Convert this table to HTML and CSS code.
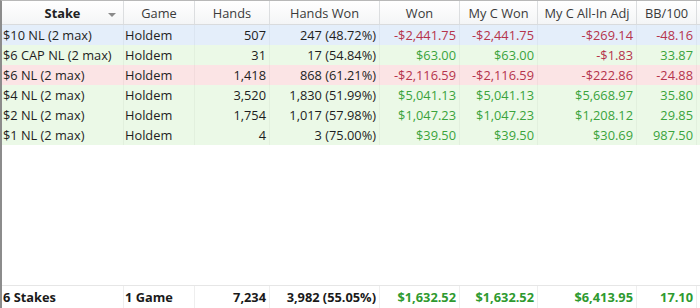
FILE: index.html
```html
<!DOCTYPE html>
<html>
<head>
<meta charset="utf-8">
<link rel="stylesheet" href="styles.css">
</head>
<body>
<div class="grid">
  <div class="row head">
    <div class="cell c-stake"><span class="bold">Stake</span><span class="sort"></span></div>
    <div class="cell">Game</div>
    <div class="cell">Hands</div>
    <div class="cell">Hands Won</div>
    <div class="cell">Won</div>
    <div class="cell">My C Won</div>
    <div class="cell">My C All-In Adj</div>
    <div class="cell">BB/100</div>
    <div class="cell last"></div>
  </div>
  <div class="row blue">
    <div class="cell l">$10 NL (2 max)</div><div class="cell l">Holdem</div><div class="cell r">507</div><div class="cell r">247 (48.72%)</div>
    <div class="cell r neg">-$2,441.75</div><div class="cell r neg">-$2,441.75</div><div class="cell r neg">-$269.14</div><div class="cell r neg">-48.16</div><div class="cell last"></div>
  </div>
  <div class="row green">
    <div class="cell l">$6 CAP NL (2 max)</div><div class="cell l">Holdem</div><div class="cell r">31</div><div class="cell r">17 (54.84%)</div>
    <div class="cell r pos">$63.00</div><div class="cell r pos">$63.00</div><div class="cell r neg">-$1.83</div><div class="cell r pos">33.87</div><div class="cell last"></div>
  </div>
  <div class="row pink">
    <div class="cell l">$6 NL (2 max)</div><div class="cell l">Holdem</div><div class="cell r">1,418</div><div class="cell r">868 (61.21%)</div>
    <div class="cell r neg">-$2,116.59</div><div class="cell r neg">-$2,116.59</div><div class="cell r neg">-$222.86</div><div class="cell r neg">-24.88</div><div class="cell last"></div>
  </div>
  <div class="row green">
    <div class="cell l">$4 NL (2 max)</div><div class="cell l">Holdem</div><div class="cell r">3,520</div><div class="cell r">1,830 (51.99%)</div>
    <div class="cell r pos">$5,041.13</div><div class="cell r pos">$5,041.13</div><div class="cell r pos">$5,668.97</div><div class="cell r pos">35.80</div><div class="cell last"></div>
  </div>
  <div class="row green">
    <div class="cell l">$2 NL (2 max)</div><div class="cell l">Holdem</div><div class="cell r">1,754</div><div class="cell r">1,017 (57.98%)</div>
    <div class="cell r pos">$1,047.23</div><div class="cell r pos">$1,047.23</div><div class="cell r pos">$1,208.12</div><div class="cell r pos">29.85</div><div class="cell last"></div>
  </div>
  <div class="row green">
    <div class="cell l">$1 NL (2 max)</div><div class="cell l">Holdem</div><div class="cell r">4</div><div class="cell r">3 (75.00%)</div>
    <div class="cell r pos">$39.50</div><div class="cell r pos">$39.50</div><div class="cell r pos">$30.69</div><div class="cell r pos">987.50</div><div class="cell last"></div>
  </div>
  <div class="spacer"></div>
  <div class="row foot">
    <div class="cell l">6 Stakes</div><div class="cell l">1 Game</div><div class="cell r">7,234</div><div class="cell r">3,982 (55.05%)</div>
    <div class="cell r fpos">$1,632.52</div><div class="cell r fpos">$1,632.52</div><div class="cell r fpos">$6,413.95</div><div class="cell r fpos">17.10</div><div class="cell last"></div>
  </div>
</div>
</body>
</html>
```

FILE: styles.css
```css
html, body {
  margin: 0;
  padding: 0;
  background: #ffffff;
}

body {
  font-family: "Open Sans", "Noto Sans", "Liberation Sans", sans-serif;
  font-size: 12.8px;
  color: #1e1e1e;
}

.grid {
  width: 700px;
  height: 308px;
  box-sizing: border-box;
  border-left: 2px solid #8c8c8c;
  border-top: 1px solid #b8b8b8;
  display: flex;
  flex-direction: column;
  overflow: hidden;
}

.row {
  display: grid;
  grid-template-columns: 122px 71px 75px 110px 80px 78px 99px 60px 1fr;
  height: 20px;
  align-items: stretch;
}

.cell {
  display: flex;
  align-items: center;
  white-space: nowrap;
  overflow: hidden;
  border-right: 1px solid rgba(0, 0, 0, 0.035);
  box-sizing: border-box;
}

.cell.l {
  padding-left: 1px;
}

.cell.r {
  justify-content: flex-end;
  padding-right: 3px;
}

.cell.last {
  border-right: none;
}

.head {
  height: 24px;
  box-sizing: border-box;
  background: linear-gradient(#ffffff, #f4f5f6);
  border-bottom: 1px solid #d9dbdd;
  color: #3a3a3a;
}

.head .cell {
  justify-content: center;
  border-right: 1px solid #dcdee0;
}

.head .cell.last {
  border-right: none;
}

.head .c-stake {
  position: relative;
}

.bold {
  font-weight: 700;
  color: #222;
}

.sort {
  position: absolute;
  right: 7px;
  top: 12px;
  width: 0;
  height: 0;
  border-left: 4px solid transparent;
  border-right: 4px solid transparent;
  border-top: 4px solid #8a8a8a;
}

.blue { background: #e4eefa; }
.green { background: #ebf9e7; }
.pink { background: #fbe4e5; }

.neg { color: #b5344c; }
.pos { color: #3aa33c; }

.spacer {
  flex: 1;
}

.foot {
  height: 22px;
  border-top: 1px solid #e6e6e6;
  font-weight: 700;
  color: #1a1a1a;
}

.foot .cell {
  border-right: 1px solid #eeeeee;
}

.foot .cell.last {
  border-right: none;
}

.fpos { color: #2e9a30; }
```
